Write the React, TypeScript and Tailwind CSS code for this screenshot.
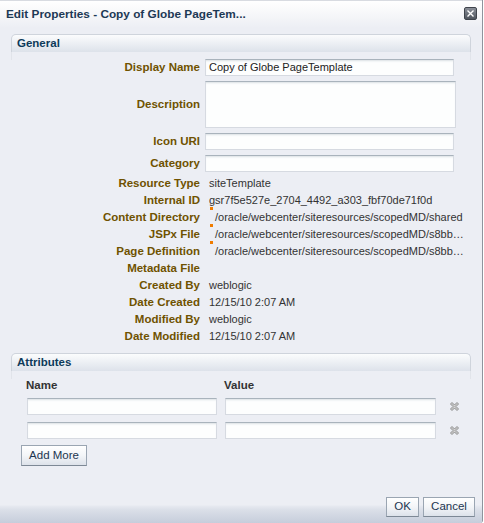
import React from "react";

const font = { fontFamily: '"Liberation Sans", Arial, sans-serif' };

function SectionHeader({ title }: { title: string }) {
  return (
    <div className="flex flex-col">
      <div className="h-[18px] rounded-t-[5px] border border-b-0 border-[#cfd4dc] bg-[linear-gradient(to_bottom,#fbfcfd,#e6eaf0_70%,#dde2ea)] flex items-center pl-[5px]">
        <span className="text-[11.5px] font-bold text-[#0d3a5a] leading-none">{title}</span>
      </div>
      <div className="h-[8px] border-x border-[#e1e4ea]" />
    </div>
  );
}

function TextInput({ value = "", w }: { value?: string; w: string }) {
  return (
    <div
      className={`${w} h-[17px] bg-[#fdfefe] border border-[#d6dae1] border-t-[#a9b3bc] shadow-[inset_0_2px_2px_-1px_rgba(120,135,150,0.25)] flex items-center pl-[3px] text-[11px] text-[#222] leading-none`}
    >
      {value}
    </div>
  );
}

function Label({ children }: { children: React.ReactNode }) {
  return (
    <div className="w-[189px] shrink-0 text-right text-[11.5px] font-bold text-[#6f5200] leading-none">
      {children}
    </div>
  );
}

function InfoRow({ label, value, marked }: { label: string; value?: string; marked?: boolean }) {
  return (
    <div className="flex items-center h-[17px] gap-[5px]">
      <Label>{label}</Label>
      <div className="relative pl-[4px] text-[11px] text-[#333] leading-none whitespace-nowrap">
        {marked && <span className="absolute left-[5px] -top-[5px] w-[3px] h-[3px] bg-[#f07c00]" />}
        <span className={marked ? "pl-[6px]" : ""}>{value}</span>
      </div>
    </div>
  );
}

function DeleteIcon() {
  return (
    <svg width="11" height="11" viewBox="0 0 11 11" className="shrink-0">
      <g stroke="#8c8c8c" strokeWidth="1" fill="#d6d6d6">
        <path d="M1.5 3 L3 1.5 L5.5 4 L8 1.5 L9.5 3 L7 5.5 L9.5 8 L8 9.5 L5.5 7 L3 9.5 L1.5 8 L4 5.5 Z" />
      </g>
      <path d="M3 3 L8 8 M8 3 L3 8" stroke="#b5b5b5" strokeWidth="0.8" />
    </svg>
  );
}

function Button({ children, w }: { children: React.ReactNode; w: string }) {
  return (
    <div
      className={`${w} h-[20px] flex items-center justify-center border border-[#9aa5b2] border-b-[#7d8895] bg-[linear-gradient(to_bottom,#ffffff,#f3f5f8_50%,#dde2ea)] text-[11.5px] text-[#1c3550] leading-none`}
    >
      {children}
    </div>
  );
}

export default function App() {
  return (
    <div
      style={font}
      className="w-[483px] h-[523px] flex flex-col bg-[#eceef4] border-r border-[#8e949d] rounded-br-[3px] overflow-hidden"
    >
      {/* title bar */}
      <div className="h-[28px] shrink-0 flex items-center pl-[6px] pr-[5px] bg-[linear-gradient(to_bottom,#ffffff,#f4f5f8_60%,#eceef4)] border-t border-[#d8dbe1]">
        <span className="text-[11.8px] font-bold text-[#1d3955] leading-none">
          Edit Properties - Copy of Globe PageTem...
        </span>
        <div className="ml-auto -mt-[2px] w-[13px] h-[13px] rounded-[2px] bg-[linear-gradient(to_bottom,#8a8f98,#4f555e)] border border-[#3f444c] flex items-center justify-center">
          <svg width="9" height="9" viewBox="0 0 9 9">
            <path d="M1.5 1.5 L7.5 7.5 M7.5 1.5 L1.5 7.5" stroke="#ffffff" strokeWidth="1.4" />
          </svg>
        </div>
      </div>

      {/* body */}
      <div className="flex-1 flex flex-col pl-[11px] pr-[11px] pt-[6px]">
        <SectionHeader title="General" />

        <div className="flex flex-col -mt-[1px]">
          <div className="flex items-center gap-[5px] mb-[5px]">
            <Label>Display Name</Label>
            <TextInput w="w-[249px]" value="Copy of Globe PageTemplate" />
          </div>
          <div className="flex items-center gap-[5px] mb-[5px]">
            <Label>Description</Label>
            <div className="w-[251px] h-[47px] bg-[#fdfefe] border border-[#d6dae1] border-t-[#a9b3bc] shadow-[inset_0_2px_2px_-1px_rgba(120,135,150,0.25)]" />
          </div>
          <div className="flex items-center gap-[5px] mb-[5px]">
            <Label>Icon URI</Label>
            <TextInput w="w-[249px]" />
          </div>
          <div className="flex items-center gap-[5px] mb-[3px]">
            <Label>Category</Label>
            <TextInput w="w-[249px]" />
          </div>

          <InfoRow label="Resource Type" value="siteTemplate" />
          <InfoRow label="Internal ID" value="gsr7f5e527e_2704_4492_a303_fbf70de71f0d" />
          <InfoRow label="Content Directory" value="/oracle/webcenter/siteresources/scopedMD/shared" marked />
          <InfoRow label="JSPx File" value="/oracle/webcenter/siteresources/scopedMD/s8bb…" marked />
          <InfoRow label="Page Definition" value="/oracle/webcenter/siteresources/scopedMD/s8bb…" marked />
          <InfoRow label="Metadata File" />
          <InfoRow label="Created By" value="weblogic" />
          <InfoRow label="Date Created" value="12/15/10 2:07 AM" />
          <InfoRow label="Modified By" value="weblogic" />
          <InfoRow label="Date Modified" value="12/15/10 2:07 AM" />
        </div>

        <div className="mt-[8px]">
          <SectionHeader title="Attributes" />
        </div>

        <div className="flex flex-col -mt-[2px]">
          <div className="flex h-[17px] items-center pl-[15px] text-[11.5px] font-bold text-[#333] leading-none">
            <span className="w-[198px]">Name</span>
            <span>Value</span>
          </div>
          {[0, 1].map((i) => (
            <div key={i} className={`flex items-center pl-[16px] ${i === 0 ? "mt-[4px]" : "mt-[7px]"}`}>
              <TextInput w="w-[190px]" />
              <div className="w-[8px]" />
              <TextInput w="w-[211px]" />
              <div className="w-[13px]" />
              <DeleteIcon />
            </div>
          ))}
          <div className="mt-[6px] pl-[10px]">
            <Button w="w-[66px] h-[21px]">Add More</Button>
          </div>
        </div>
      </div>

      {/* footer */}
      <div className="h-[26px] shrink-0 flex justify-end items-start gap-[4px] pr-[7px] bg-[linear-gradient(to_bottom,#eceef4_0px,#eceef4_8px,#e6e9f0_9px,#dadfe8_50%,#c6cddb_100%)]">
        <Button w="w-[33px]">OK</Button>
        <Button w="w-[52px]">Cancel</Button>
      </div>
    </div>
  );
}
